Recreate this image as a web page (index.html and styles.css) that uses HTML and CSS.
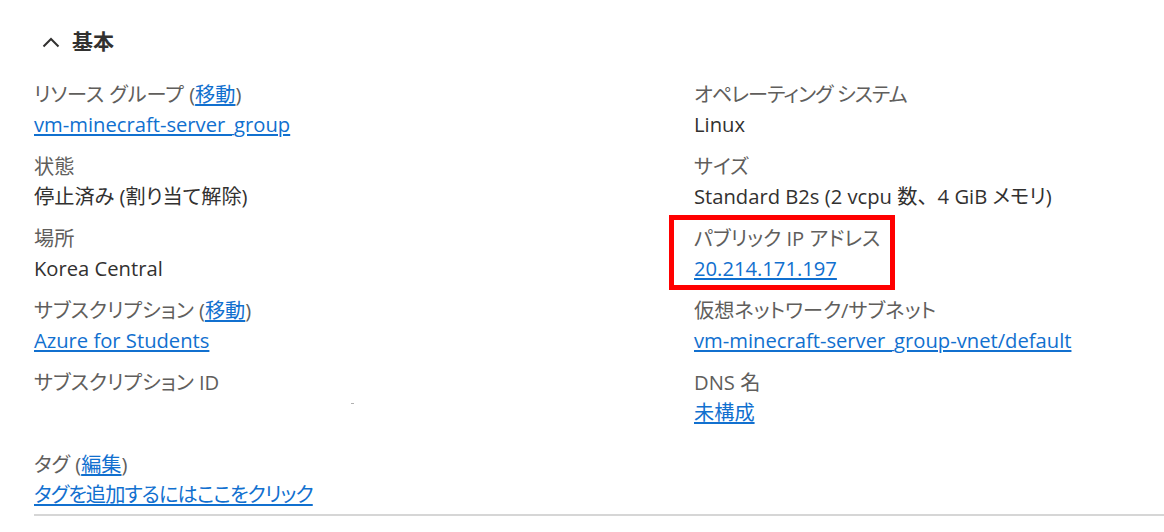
FILE: index.html
```html
<!DOCTYPE html>
<html lang="ja">
<head>
<meta charset="utf-8">
<link rel="stylesheet" href="styles.css">
</head>
<body>
<section class="panel">
  <h2 class="heading">
    <svg class="chev" width="18" height="12" viewBox="0 0 18 12"><path d="M1.5 10.5 L9 3 L16.5 10.5" fill="none" stroke="#323130" stroke-width="2"/></svg>
    <span>基本</span>
  </h2>
  <div class="grid">
    <div class="col">
      <div class="item">
        <div class="label">リソース グループ (<a href="#">移動</a>)</div>
        <div class="value"><a href="#">vm-minecraft-server_group</a></div>
      </div>
      <div class="item">
        <div class="label">状態</div>
        <div class="value">停止済み (割り当て解除)</div>
      </div>
      <div class="item">
        <div class="label">場所</div>
        <div class="value">Korea Central</div>
      </div>
      <div class="item">
        <div class="label">サブスクリプション (<a href="#">移動</a>)</div>
        <div class="value"><a href="#">Azure for Students</a></div>
      </div>
      <div class="item">
        <div class="label">サブスクリプション ID</div>
        <div class="value empty"><span class="dash"></span></div>
      </div>
      <div class="item tags">
        <div class="label">タグ (<a href="#">編集</a>)</div>
        <div class="value"><a href="#" class="tight">タグを追加するにはここをクリック</a></div>
      </div>
    </div>
    <div class="col">
      <div class="item">
        <div class="label tight">オペレーティング システム</div>
        <div class="value">Linux</div>
      </div>
      <div class="item">
        <div class="label">サイズ</div>
        <div class="value">Standard B2s (2 vcpu 数<span class="fullwidth">、</span>4 GiB メモリ)</div>
      </div>
      <div class="item marked">
        <div class="label">パブリック IP アドレス</div>
        <div class="value"><a href="#">20.214.171.197</a></div>
        <div class="highlight"></div>
      </div>
      <div class="item">
        <div class="label">仮想ネットワーク/サブネット</div>
        <div class="value"><a href="#">vm-minecraft-server_group-vnet/default</a></div>
      </div>
      <div class="item">
        <div class="label">DNS 名</div>
        <div class="value"><a href="#">未構成</a></div>
      </div>
    </div>
  </div>
  <div class="rule"></div>
</section>
</body>
</html>
```
FILE: styles.css
```css
html, body {
  margin: 0;
  padding: 0;
  background: #ffffff;
}
body {
  font-family: "Open Sans", "Noto Sans CJK JP", sans-serif;
  font-size: 20.2px;
  font-feature-settings: "palt";
  color: #323130;
}
.panel {
  padding: 26px 0 0 34px;
}
.heading {
  display: flex;
  align-items: center;
  gap: 12px;
  margin: 0 0 23px 0;
  padding-left: 8px;
  font-size: 21px;
  font-weight: 600;
  line-height: 30px;
  color: #323130;
}
.chev {
  display: block;
  margin-top: 1px;
}
.grid {
  display: grid;
  grid-template-columns: 660px 1fr;
}
.col {
  display: flex;
  flex-direction: column;
  gap: 12px;
}
.item {
  position: relative;
}
.label {
  line-height: 30px;
  color: #605e5c;
  white-space: nowrap;
}
.value {
  line-height: 30px;
  color: #323130;
  white-space: nowrap;
}
.tight {
  letter-spacing: -0.9px;
}
.fullwidth {
  font-feature-settings: normal;
}
.value.empty {
  height: 40px;
  position: relative;
}
.dash {
  position: absolute;
  left: 317px;
  top: 6px;
  width: 3px;
  height: 1px;
  background: #b0b0b0;
}
a {
  color: #1170cf;
  text-decoration: underline;
  text-underline-offset: 2px;
}
.highlight {
  position: absolute;
  left: -25px;
  top: -8px;
  width: 216px;
  height: 65px;
  border: 5px solid #ff0000;
}
.rule {
  height: 2px;
  background: #d6d6d6;
  margin-top: 5px;
}
```
